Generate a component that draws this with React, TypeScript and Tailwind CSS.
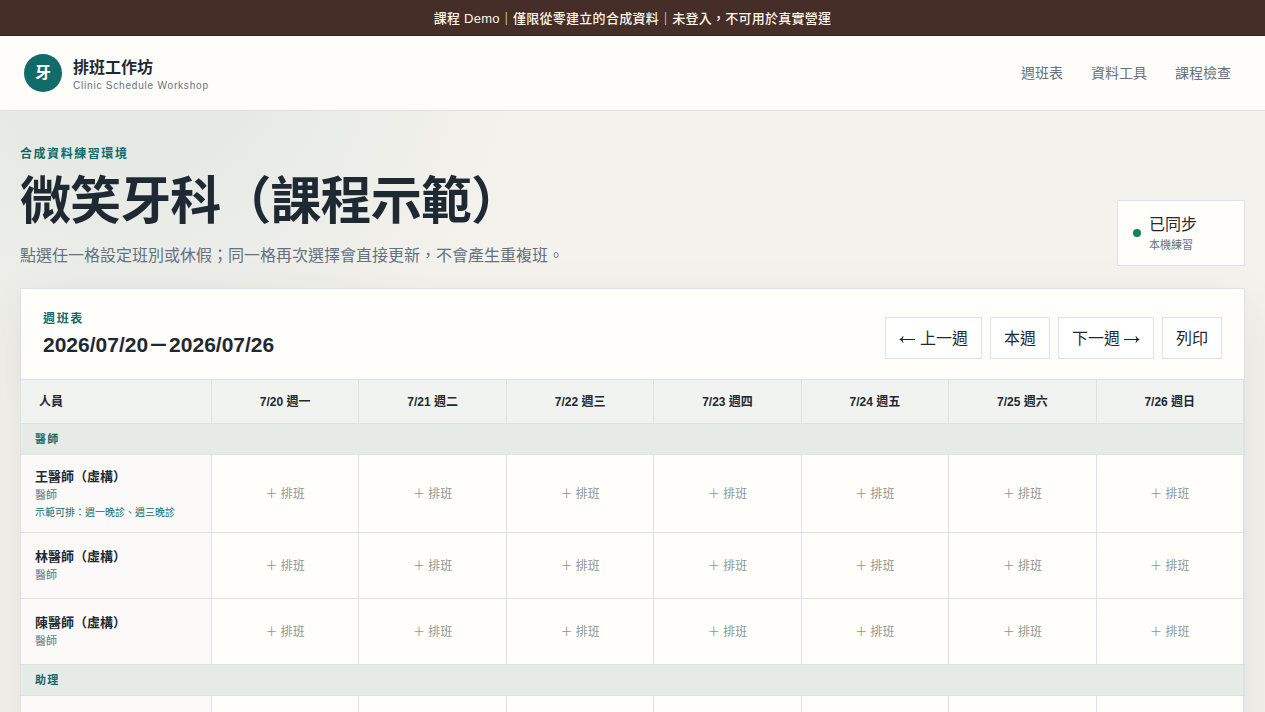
const DAYS = ["7/20 週一", "7/21 週二", "7/22 週三", "7/23 週四", "7/24 週五", "7/25 週六", "7/26 週日"];

type Person = { name: string; role: string; note?: string };

const GROUPS: { label: string; people: Person[] }[] = [
  {
    label: "醫師",
    people: [
      { name: "王醫師（虛構）", role: "醫師", note: "示範可排：週一晚診、週三晚診" },
      { name: "林醫師（虛構）", role: "醫師" },
      { name: "陳醫師（虛構）", role: "醫師" },
    ],
  },
  { label: "助理", people: [] },
];

const NAV = ["週班表", "資料工具", "課程檢查"];
const ROW = "grid grid-cols-[191px_repeat(7,minmax(0,1fr))]";
const BUTTON =
  "flex h-[42px] items-center border border-[#dce3e8] bg-white px-[13px] pt-0.5 text-base whitespace-nowrap";

function Arrow({ className = "" }: { className?: string }) {
  return (
    <svg viewBox="0 0 16 16" className={`h-4 w-4 shrink-0 ${className}`} fill="none" aria-hidden="true">
      <path d="M0 8.5H14.5" stroke="currentColor" strokeWidth="1.1" />
      <path d="M11.4 5.2L12.2 5.2Q13.4 7.6 15.8 8.5Q13.4 9.4 12.2 11.8L11.4 11.8L12.6 8.5Z" fill="currentColor" />
    </svg>
  );
}

function SiteHeader() {
  return (
    <header className="flex h-[75px] items-center justify-between border-b border-[#dce3e8] bg-[#fffefa]/95 px-6">
      <div className="flex items-center gap-[11px]">
        <span className="grid size-[38px] place-items-center rounded-full bg-[#126b68] text-base font-bold text-white">
          牙
        </span>
        <div className="pt-[5px]">
          <p className="text-base leading-5 font-bold">排班工作坊</p>
          <p className="text-[10px] leading-[15px] tracking-[0.08em] text-[#657180]">Clinic Schedule Workshop</p>
        </div>
      </div>
      <nav className="flex gap-2">
        {NAV.map((item) => (
          <a key={item} href="#" className="px-2.5 text-sm text-[#657180]">
            {item}
          </a>
        ))}
      </nav>
    </header>
  );
}

function PageHeading() {
  return (
    <section className="flex items-end justify-between">
      <div>
        <p className="text-xs leading-[18px] font-bold tracking-[0.13em] text-[#126b68]">合成資料練習環境</p>
        <h1 className="mt-[9px] text-[51px] leading-[60px] font-bold tracking-[-0.9px]">微笑牙科（課程示範）</h1>
        <p className="mt-3.5 text-base leading-5 text-[#657180]">
          點選任一格設定班別或休假；同一格再次選擇會直接更新，不會產生重複班。
        </p>
      </div>
      <div className="flex h-[66px] w-32 items-center gap-2 border border-[#dce3e8] bg-[#fffefa] px-[15px]">
        <span className="size-2 rounded-full bg-[#16825d]" />
        <div>
          <p className="text-base leading-6">已同步</p>
          <p className="text-[11px] leading-[17px] text-[#657180]">本機練習</p>
        </div>
      </div>
    </section>
  );
}

function WeekToolbar() {
  return (
    <div className="flex h-[91px] items-center justify-between border-b border-[#dce3e8] px-[22px]">
      <div className="pt-0.5">
        <p className="text-xs leading-[18px] font-bold tracking-[0.14em] text-[#126b68]">週班表</p>
        <h2 className="mt-0.5 text-[21px] leading-[30px] font-bold">2026/07/20－2026/07/26</h2>
      </div>
      <div className="mt-[7px] flex gap-2">
        <button type="button" className={`${BUTTON} w-[97px] justify-between`}>
          <Arrow className="-scale-x-100" />
          上一週
        </button>
        <button type="button" className={BUTTON}>
          本週
        </button>
        <button type="button" className={`${BUTTON} w-24 justify-between`}>
          下一週
          <Arrow />
        </button>
        <button type="button" className={BUTTON}>
          列印
        </button>
      </div>
    </div>
  );
}

function PersonRow({ person }: { person: Person }) {
  return (
    <div className={`${ROW} ${person.note ? "h-[78px]" : "h-[66px]"}`}>
      <div className="flex flex-col justify-center border-r border-b border-[#dce3e8] bg-[#fbfaf8] pl-3.5">
        <p className="text-[13px] leading-5 font-bold">{person.name}</p>
        <p className="text-[11px] leading-[17px] text-[#657180]">{person.role}</p>
        {person.note && <p className="mt-px text-[10px] leading-[15px] text-[#126b68]">{person.note}</p>}
      </div>
      {DAYS.map((day) => (
        <button
          key={day}
          type="button"
          className="border-r border-b border-[#dce3e8] text-center text-xs text-[#8d9794]"
        >
          ＋ 排班
        </button>
      ))}
    </div>
  );
}

function EmptyRow() {
  return (
    <div className={`${ROW} h-[66px]`}>
      <div className="border-r border-[#dce3e8] bg-[#fbfaf8]" />
      {DAYS.map((day) => (
        <div key={day} className="border-r border-[#dce3e8]" />
      ))}
    </div>
  );
}

export default function App() {
  return (
    <div className="h-[712px] overflow-hidden bg-[#f4f2ed] bg-[radial-gradient(circle_at_10%_5%,rgba(18,107,90,0.09),transparent_400px)] font-['Liberation_Sans','Noto_Sans_CJK_TC',sans-serif] text-[#1f2933]">
      <div className="flex h-9 items-center justify-center border-b border-[#39231f] bg-[#452d28] pt-0.5 text-[13px] font-medium tracking-[0.02em] text-[#fff7e8]">
        課程 Demo｜僅限從零建立的合成資料｜未登入，不可用於真實營運
      </div>
      <SiteHeader />
      <main className="px-5 pt-[34px]">
        <PageHeading />
        <section className="mt-[22px] border border-[#dce3e8] bg-[#fffefa] shadow-[0_18px_50px_rgba(49,43,36,0.09)]">
          <WeekToolbar />
          <div className={`${ROW} h-11 bg-[#f1f3f1] text-xs font-bold`}>
            <div className="flex items-center border-r border-b border-[#dce3e8] pl-[18px]">人員</div>
            {DAYS.map((day) => (
              <div key={day} className="flex items-center justify-center border-r border-b border-[#dce3e8]">
                {day}
              </div>
            ))}
          </div>
          {GROUPS.map((group) => (
            <div key={group.label}>
              <div className="flex h-[31px] items-center border-r border-b border-[#dce3e8] bg-[#e6ebe7] pl-3.5 text-[11px] font-bold tracking-[0.12em] text-[#126b68]">
                {group.label}
              </div>
              {group.people.map((person) => (
                <PersonRow key={person.name} person={person} />
              ))}
              {group.people.length === 0 && <EmptyRow />}
            </div>
          ))}
        </section>
      </main>
    </div>
  );
}
